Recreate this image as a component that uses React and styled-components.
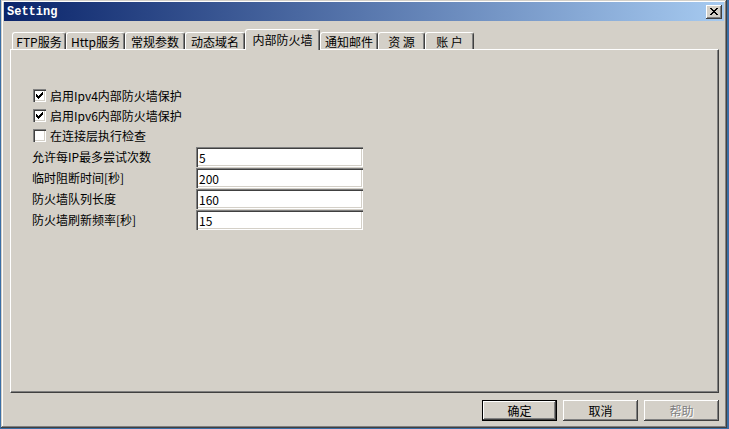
import styled, { createGlobalStyle } from "styled-components";

const GlobalStyle = createGlobalStyle`
  html, body {
    margin: 0;
    padding: 0;
    background: #3a6ea5;
  }
  body {
    font-family: "Noto Sans CJK SC", "Liberation Sans", sans-serif;
    font-size: 12px;
    line-height: 14px;
    color: #000;
  }
`;

const face = "#d4d0c8";
const raised = `inset -1px -1px #404040, inset 1px 1px #fff, inset -2px -2px #808080, inset 2px 2px ${face}`;
const sunken = `inset 1px 1px #808080, inset 2px 2px #404040, inset -1px -1px #fff, inset -2px -2px ${face}`;

const Window = styled.div`
  box-sizing: border-box;
  width: 726px;
  height: 428px;
  margin-left: 1px;
  padding: 2px 3px 3px 3px;
  background: ${face};
  box-shadow: inset -1px -1px #404040, inset 1px 1px ${face}, inset -2px -2px #808080, inset 2px 2px #fff;
  display: flex;
  flex-direction: column;
`;

const TitleBar = styled.div`
  height: 19px;
  display: flex;
  align-items: center;
  justify-content: space-between;
  padding: 0 2px 0 2px;
  background: linear-gradient(to right, #0a246a, #a6caf0);
`;

const Title = styled.span`
  font-family: "Liberation Mono", "DejaVu Sans Mono", monospace;
  font-weight: bold;
  font-size: 12px;
  color: #fff;
  margin-left: 1px;
`;

const CloseButton = styled.div`
  box-sizing: border-box;
  width: 16px;
  height: 14px;
  background: ${face};
  box-shadow: ${raised};
  display: flex;
  align-items: center;
  justify-content: center;
`;

const Body = styled.div`
  flex: 1;
  display: flex;
  flex-direction: column;
  padding: 8px 5px 0 6px;
`;

const Tabs = styled.div`
  display: flex;
  align-items: flex-end;
  height: 20px;
  padding-left: 2px;
  position: relative;
  z-index: 1;
`;

const Tab = styled.div`
  box-sizing: border-box;
  width: ${(p) => p.$w}px;
  height: ${(p) => (p.$active ? 21 : 17)}px;
  margin-bottom: ${(p) => (p.$active ? -1 : 0)}px;
  border-top: 1px solid #fff;
  border-left: 1px solid #fff;
  border-right: 1px solid #404040;
  border-radius: 3px 3px 0 0;
  box-shadow: inset -1px 0 #808080;
  background: ${face};
  display: flex;
  justify-content: center;
  align-items: ${(p) => (p.$active ? "flex-start" : "center")};
  padding-top: ${(p) => (p.$active ? 3 : 1)}px;
  white-space: pre;
`;

const Panel = styled.div`
  box-sizing: border-box;
  height: 344px;
  border-top: 1px solid #fff;
  border-left: 1px solid #fff;
  border-right: 1px solid #404040;
  border-bottom: 1px solid #404040;
  box-shadow: inset -1px -1px #808080;
  padding: 39px 0 0 22px;
`;

const CheckList = styled.div`
  display: flex;
  flex-direction: column;
  gap: 7px;
`;

const CheckRow = styled.label`
  display: flex;
  align-items: center;
  height: 13px;
  gap: 4px;
`;

const CheckBox = styled.span`
  box-sizing: border-box;
  width: 13px;
  height: 13px;
  background: #fff;
  box-shadow: ${sunken};
  display: flex;
  padding: 3px;
`;

const FieldList = styled.div`
  display: flex;
  flex-direction: column;
  gap: 1px;
  margin-top: 5px;
  margin-left: -1px;
`;

const FieldRow = styled.div`
  display: grid;
  grid-template-columns: 164px 167px;
  align-items: center;
  height: 20px;
`;

const TextBox = styled.input`
  box-sizing: border-box;
  width: 167px;
  height: 20px;
  border: none;
  outline: none;
  margin: 0;
  padding: 1px 0 0 3px;
  background: #fff;
  box-shadow: ${sunken};
  font: inherit;
  color: #000;
`;

const ButtonRow = styled.div`
  display: flex;
  justify-content: flex-end;
  gap: 6px;
  margin-top: 7px;
`;

const Button = styled.div`
  box-sizing: border-box;
  width: 75px;
  height: 21px;
  background: ${face};
  border: ${(p) => (p.$default ? "1px solid #000" : "none")};
  box-shadow: ${raised};
  display: flex;
  align-items: center;
  justify-content: center;
  color: ${(p) => (p.$disabled ? "#808080" : "#000")};
  text-shadow: ${(p) => (p.$disabled ? "1px 1px #fff" : "none")};
`;

const tabs = [
  { label: "FTP服务", w: 54 },
  { label: "Http服务", w: 59 },
  { label: "常规参数", w: 60 },
  { label: "动态域名", w: 60 },
  { label: "内部防火墙", w: 75, active: true },
  { label: "通知邮件", w: 58 },
  { label: "资 源", w: 47 },
  { label: "账 户", w: 49 },
];

const checks = [
  { label: "启用Ipv4内部防火墙保护", on: true },
  { label: "启用Ipv6内部防火墙保护", on: true },
  { label: "在连接层执行检查", on: false },
];

const fields = [
  { label: "允许每IP最多尝试次数", value: "5" },
  { label: "临时阻断时间[秒]", value: "200" },
  { label: "防火墙队列长度", value: "160" },
  { label: "防火墙刷新频率[秒]", value: "15" },
];

const CheckMark = () => (
  <svg width="7" height="7" viewBox="0 0 7 7" shapeRendering="crispEdges">
    <path d="M0 2h1v1h1v1h1v-1h1v-1h1v-1h1v-1h1v3h-1v1h-1v1h-1v1h-1v1h-1v-1h-1v-1h-1z" fill="#000" />
  </svg>
);

const CloseGlyph = () => (
  <svg width="8" height="7" viewBox="0 0 8 7" shapeRendering="crispEdges">
    <path d="M0 0h2v1h1v1h2v-1h1v-1h2v1h-1v1h-1v1h-1v1h1v1h1v1h1v1h-2v-1h-1v-1h-2v1h-1v1h-2v-1h1v-1h1v-1h1v-1h-1v-1h-1v-1h-1z" fill="#000" />
  </svg>
);

const App = () => (
  <>
    <GlobalStyle />
    <Window>
      <TitleBar>
        <Title>Setting</Title>
        <CloseButton>
          <CloseGlyph />
        </CloseButton>
      </TitleBar>
      <Body>
        <Tabs>
          {tabs.map(({ label, w, active }) => (
            <Tab key={label} $w={w} $active={active}>
              {label}
            </Tab>
          ))}
        </Tabs>
        <Panel>
          <CheckList>
            {checks.map(({ label, on }) => (
              <CheckRow key={label}>
                <CheckBox>{on && <CheckMark />}</CheckBox>
                {label}
              </CheckRow>
            ))}
          </CheckList>
          <FieldList>
            {fields.map(({ label, value }) => (
              <FieldRow key={label}>
                <span>{label}</span>
                <TextBox readOnly value={value} />
              </FieldRow>
            ))}
          </FieldList>
        </Panel>
        <ButtonRow>
          <Button $default>确定</Button>
          <Button>取消</Button>
          <Button $disabled>帮助</Button>
        </ButtonRow>
      </Body>
    </Window>
  </>
);

export default App;
